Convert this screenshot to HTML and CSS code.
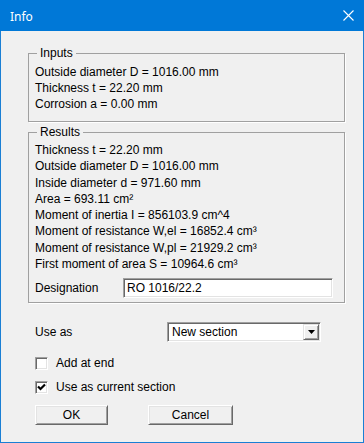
FILE: index.html
```html
<!DOCTYPE html>
<html lang="en">
<head>
    <meta charset="UTF-8">
    <meta name="viewport" content="width=device-width, initial-scale=1.0">
    <title>Info</title>
    <link rel="stylesheet" href="styles.css">
</head>
<body>
    <div class="window">
        <div class="titlebar">
            <span class="title">Info</span>
            <svg class="close" width="11" height="11" viewBox="0 0 11 11">
                <path d="M0.5 0.5 L10.5 10.5 M10.5 0.5 L0.5 10.5" stroke="#fff" stroke-width="1.1" fill="none"/>
            </svg>
        </div>

        <div class="content">
            <fieldset class="group">
                <legend>Inputs</legend>
                <div class="lines">
                    <div>Outside diameter D = 1016.00 mm</div>
                    <div>Thickness t = 22.20 mm</div>
                    <div>Corrosion a = 0.00 mm</div>
                </div>
            </fieldset>

            <fieldset class="group results">
                <legend>Results</legend>
                <div class="lines">
                    <div>Thickness t = 22.20 mm</div>
                    <div>Outside diameter D = 1016.00 mm</div>
                    <div>Inside diameter d = 971.60 mm</div>
                    <div>Area = 693.11 cm²</div>
                    <div>Moment of inertia I = 856103.9 cm^4</div>
                    <div>Moment of resistance W,el = 16852.4 cm³</div>
                    <div>Moment of resistance W,pl = 21929.2 cm³</div>
                    <div>First moment of area S = 10964.6 cm³</div>
                </div>
                <div class="field-row">
                    <label for="designation">Designation</label>
                    <input type="text" id="designation" class="edit" value="RO 1016/22.2">
                </div>
            </fieldset>

            <div class="options">
                <div class="use-row">
                    <span class="use-label">Use as</span>
                    <div class="combo">
                        <span class="combo-text">New section</span>
                        <span class="drop">
                            <svg width="7" height="4" viewBox="0 0 7 4"><path d="M0 0 H7 L3.5 4 Z" fill="#000"/></svg>
                        </span>
                    </div>
                </div>

                <div class="check first">
                    <span class="box"></span>
                    <span>Add at end</span>
                </div>
                <div class="check second">
                    <span class="box">
                        <svg width="9" height="9" viewBox="0 0 9 9"><path d="M1 3.5 L3.5 6 L8 1.5" stroke="#000" stroke-width="2.2" fill="none"/></svg>
                    </span>
                    <span>Use as current section</span>
                </div>

                <div class="buttons">
                    <button class="btn ok">OK</button>
                    <button class="btn cancel">Cancel</button>
                </div>
            </div>
        </div>
    </div>
</body>
</html>
```

FILE: styles.css
```css
* {
    margin: 0;
    padding: 0;
    box-sizing: border-box;
}

body {
    background-color: #f0f0f0;
    font-family: 'Liberation Sans', Arial, sans-serif;
    font-size: 12px;
    color: #000;
}

.window {
    width: 364px;
    height: 443px;
    background: #f0f0f0;
    border: 1px solid #1a7fd4;
    border-top: none;
}

.titlebar {
    height: 31px;
    margin: 0 -1px;
    background: #0078d7;
    display: flex;
    align-items: center;
    justify-content: space-between;
    padding: 0 10px 0 10px;
}

.title {
    font-family: 'Noto Sans', 'Open Sans', sans-serif;
    font-size: 12px;
    color: #fff;
    margin-top: 1px;
}

/* group boxes */
.group {
    border: 1px solid #a0a0a0;
    box-shadow: 1px 1px 0 #fff;
    padding: 0 0 9px 0;
}

.group legend {
    margin-left: 8px;
    padding: 0 3px;
    line-height: 13px;
}

.content {
    padding: 16px 18px 0 27px;
}

.lines {
    padding: 4px 0 0 6px;
    line-height: 16px;
}

.results {
    margin-top: 4px;
    padding-bottom: 4px;
}

.results .lines {
    padding-top: 3px;
    line-height: 16.3px;
}

.field-row {
    display: flex;
    align-items: center;
    margin-top: 6px;
    padding-left: 6px;
}

.field-row label {
    width: 88px;
}

.edit {
    width: 210px;
    height: 20px;
    padding: 0 3px;
    font-family: inherit;
    font-size: 12px;
    color: #000;
    background: #fff;
    border: 1px solid;
    border-color: #a0a0a0 #fff #fff #a0a0a0;
    box-shadow: inset 1px 1px 0 #696969, inset -1px -1px 0 #e3e3e3;
    outline: none;
}

/* lower part */
.options {
    padding: 19px 0 0 7px;
}

.use-row {
    display: flex;
    align-items: center;
    height: 20px;
}

.use-label {
    width: 132px;
}

.combo {
    width: 154px;
    height: 20px;
    display: flex;
    align-items: center;
    justify-content: space-between;
    background: #fff;
    border: 1px solid;
    border-color: #a0a0a0 #fff #fff #a0a0a0;
    box-shadow: inset 1px 1px 0 #696969, inset -1px -1px 0 #e3e3e3;
    padding: 1px;
}

.combo-text {
    padding-left: 3px;
}

.drop {
    width: 16px;
    height: 16px;
    display: flex;
    align-items: center;
    justify-content: center;
    background: #f0f0f0;
    border: 1px solid;
    border-color: #e3e3e3 #696969 #696969 #e3e3e3;
    box-shadow: inset 1px 1px 0 #fff, inset -1px -1px 0 #a0a0a0;
}

.check {
    display: flex;
    align-items: center;
    height: 16px;
}

.check.first {
    margin-top: 13px;
}

.check.second {
    margin-top: 8px;
}

.box {
    width: 13px;
    height: 13px;
    margin-right: 8px;
    display: flex;
    align-items: center;
    justify-content: center;
    background: #fff;
    border: 1px solid;
    border-color: #a0a0a0 #fff #fff #a0a0a0;
    box-shadow: inset 1px 1px 0 #696969, inset -1px -1px 0 #e3e3e3;
}

.buttons {
    display: flex;
    margin-top: 10px;
}

.btn {
    height: 20px;
    font-family: inherit;
    font-size: 12px;
    color: #000;
    background: #f0f0f0;
    border: 1px solid;
    border-color: #fff #696969 #696969 #fff;
    box-shadow: inset 1px 1px 0 #e3e3e3, inset -1px -1px 0 #a0a0a0;
}

.ok {
    width: 73px;
}

.cancel {
    width: 85px;
    margin-left: 40px;
}
```
